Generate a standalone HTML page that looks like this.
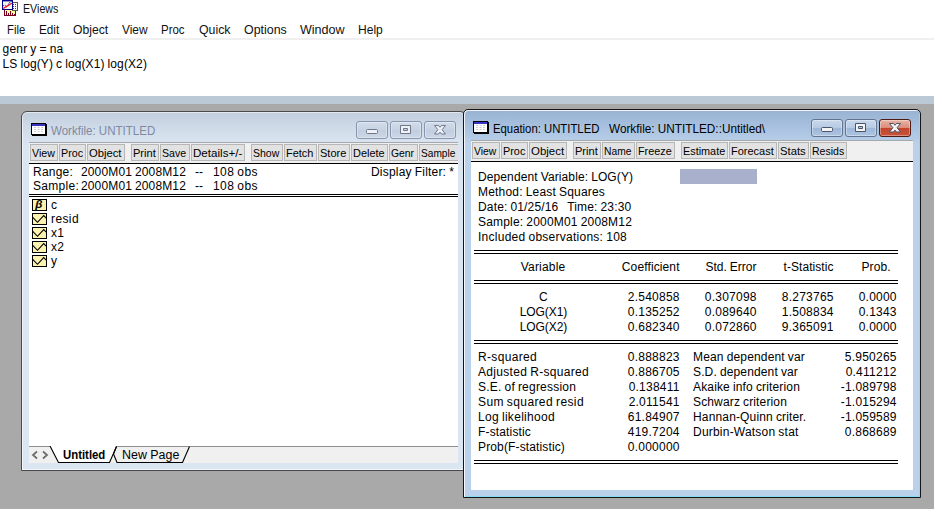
<!DOCTYPE html>
<html>
<head>
<meta charset="utf-8">
<title>EViews</title>
<style>
html,body{margin:0;padding:0;}
body{width:934px;height:509px;overflow:hidden;background:#a9a9a9;position:relative;font-family:"Liberation Sans",sans-serif;color:#000;}
.abs{position:absolute;}
.t{position:absolute;white-space:pre;line-height:12px;height:12px;}
#top{left:0;top:0;width:934px;height:96px;background:#fff;}
#sep{left:0;top:38px;width:934px;height:2px;background:#f0f0f0;}
#bar{left:0;top:96px;width:934px;height:8px;background:#bbc8d6;}
.e{font-size:12px;}
.win{position:absolute;box-sizing:border-box;border:1px solid #3f3f3f;border-radius:5px 5px 0 0;}
#wf{left:21px;top:111px;width:445px;border-radius:6px 6px 0 0;height:360px;background:linear-gradient(#c1cedd 0px,#d3deeb 20px,#dae5f1 34px,#dce6f2 100%);box-shadow:inset 0 0 0 1px rgba(255,255,255,.55);border-color:#4a4a4a;}
#eq{left:463px;top:109px;width:458px;height:389px;background:linear-gradient(#98b2d3 0px,#a9c2e0 18px,#b9d1ea 34px,#b9d1ea 100%);border-color:#151515;box-shadow:inset 1px 1px 0 rgba(255,255,255,.85),inset -1px -1px 0 #86dcf3;}
.tb{position:absolute;background:#f0f0f0;overflow:hidden;box-sizing:border-box;border-top:1px solid #a5a8ad;}
.btn{position:absolute;top:1px;height:17px;box-sizing:border-box;border:1px solid #b6b6b6;background:#e2e2e2;}
.client{position:absolute;background:#fff;}
.hl{position:absolute;background:#000;height:1px;}
.cb{position:absolute;box-sizing:border-box;border:1px solid #8795ae;border-radius:3px;box-shadow:inset 0 0 0 1px rgba(255,255,255,.35);}
</style>
</head>
<body>
<div class="abs" id="top"></div>
<div class="abs" id="sep"></div>
<div class="abs" id="bar"></div>
<svg class="abs" style="left:2px;top:0px" width="17" height="17" viewBox="0 0 17 17">
  <rect x="2.5" y="9.5" width="11" height="6" fill="#ffff9e" stroke="#7a0020" stroke-width="1"/>
  <g fill="#7a0020"><rect x="4" y="11" width="1" height="4"/><rect x="6" y="13" width="1" height="2"/><rect x="8" y="11" width="1" height="4"/><rect x="10" y="13" width="1" height="2"/><rect x="12" y="14" width="1" height="1"/></g>
  <rect x="10.5" y="2.5" width="5" height="8" fill="#fff" stroke="#555" stroke-width="1"/>
  <g fill="#444"><rect x="11" y="4" width="1" height="1"/><rect x="13" y="4" width="1" height="1"/><rect x="11" y="6" width="1" height="1"/><rect x="13" y="6" width="1" height="1"/><rect x="11" y="8" width="1" height="1"/><rect x="13" y="8" width="1" height="1"/></g>
  <rect x="0.5" y="0.5" width="10" height="9" fill="#f1f6ef" stroke="#00008b" stroke-width="1"/>
  <rect x="0" y="0" width="11" height="1.4" fill="#00008b"/>
  <path d="M1.2 5.6 L3.2 5.2 L4.6 7 L6 6.2 L6.6 3.2 L8.2 2.4 L9.6 1.6" stroke="#2020e0" stroke-width="1" stroke-dasharray="1 0.9" fill="none"/>
  <path d="M1.2 8.5 L9.7 3.3" stroke="#ff0000" stroke-width="1.2" fill="none"/>
</svg>

<div class="t" style="left:23.00px;top:3px;font-size:13px;color:#111;transform-origin:0 50%;transform:scaleX(0.8190);">EViews</div>
<div class="t" style="left:7.00px;top:24px;font-size:13px;color:#111;transform-origin:0 50%;transform:scaleX(0.8688);">File</div>
<div class="t" style="left:38.90px;top:24px;font-size:13px;color:#111;transform-origin:0 50%;transform:scaleX(0.9018);">Edit</div>
<div class="t" style="left:72.60px;top:24px;font-size:13px;color:#111;transform-origin:0 50%;transform:scaleX(0.9369);">Object</div>
<div class="t" style="left:121.60px;top:24px;font-size:13px;color:#111;transform-origin:0 50%;transform:scaleX(0.9156);">View</div>
<div class="t" style="left:161.20px;top:24px;font-size:13px;color:#111;transform-origin:0 50%;transform:scaleX(0.8829);">Proc</div>
<div class="t" style="left:199.00px;top:24px;font-size:13px;color:#111;transform-origin:0 50%;transform:scaleX(0.9479);">Quick</div>
<div class="t" style="left:243.80px;top:24px;font-size:13px;color:#111;transform-origin:0 50%;transform:scaleX(0.9553);">Options</div>
<div class="t" style="left:300.00px;top:24px;font-size:13px;color:#111;transform-origin:0 50%;transform:scaleX(0.9646);">Window</div>
<div class="t" style="left:358.20px;top:24px;font-size:13px;color:#111;transform-origin:0 50%;transform:scaleX(0.9276);">Help</div>
<div class="t e" style="left:2.50px;top:43px;letter-spacing:0.203px;word-spacing:-0.537px;">genr y = na</div>
<div class="t e" style="left:2.50px;top:58px;letter-spacing:0.106px;word-spacing:-0.440px;">LS log(Y) c log(X1) log(X2)</div>
<div class="win" id="wf"></div>
<svg class="abs" style="left:31px;top:123px" width="16" height="13" viewBox="0 0 16 13">
<rect x="1" y="1" width="15" height="12" fill="#000"/>
<rect x="0.5" y="0.5" width="14" height="11" fill="#fff" stroke="#000"/>
<rect x="1" y="1" width="13" height="2" fill="#3636c4"/>
<g fill="#cfcfcf"><rect x="3" y="4" width="2" height="1"/><rect x="6.5" y="4" width="2" height="1"/><rect x="10" y="4" width="2" height="1"/><rect x="3" y="6" width="2" height="1"/><rect x="6.5" y="6" width="2" height="1"/><rect x="10" y="6" width="2" height="1"/><rect x="3" y="8" width="2" height="1"/><rect x="6.5" y="8" width="2" height="1"/><rect x="10" y="8" width="2" height="1"/></g>
</svg>
<div class="t" style="left:51.00px;top:125px;font-size:12.5px;color:#7f89a1;transform-origin:0 50%;transform:scaleX(0.9231);">Workfile: UNTITLED</div>
<div class="cb" style="left:356px;top:121px;width:32px;height:18px;background:linear-gradient(#d2dcea,#c6d2e2 50%,#c1cedf 52%,#ccd7e6);"></div>
<svg class="abs" style="left:356px;top:121px" width="32" height="18" viewBox="0 0 32 18"><rect x="10.5" y="8.5" width="11" height="4" rx="1" fill="#eef1f5" stroke="#70778a"/></svg>
<div class="cb" style="left:390px;top:121px;width:32px;height:18px;background:linear-gradient(#d2dcea,#c6d2e2 50%,#c1cedf 52%,#ccd7e6);"></div>
<svg class="abs" style="left:390px;top:121px" width="32" height="18" viewBox="0 0 32 18"><path fill-rule="evenodd" d="M10.5 4.5h10v8h-10z M13.5 7.5v2h4v-2z" fill="#eef1f5" stroke="#70778a" stroke-linejoin="round"/></svg>
<div class="cb" style="left:424px;top:121px;width:32px;height:18px;background:linear-gradient(#d2dcea,#c6d2e2 50%,#c1cedf 52%,#ccd7e6);"></div>
<svg class="abs" style="left:424px;top:121px" width="32" height="18" viewBox="0 0 32 18"><path d="M10.5 4.5 h4 l1.5 1.8 l1.5 -1.8 h4 l-3.4 4.2 l3.4 4.3 h-4 l-1.5 -1.9 l-1.5 1.9 h-4 l3.4 -4.3 z" fill="#eef1f5" stroke="#70778a" stroke-linejoin="round"/></svg>
<div class="tb" style="left:29px;top:142px;width:429px;height:21px;">
<div class="btn" style="left:1px;width:28px;"></div>
<div class="btn" style="left:30px;width:27px;"></div>
<div class="btn" style="left:58px;width:38px;"></div>
<div class="btn" style="left:102px;width:28px;"></div>
<div class="btn" style="left:131px;width:30px;"></div>
<div class="btn" style="left:162px;width:54px;"></div>
<div class="btn" style="left:222px;width:32px;"></div>
<div class="btn" style="left:255px;width:33px;"></div>
<div class="btn" style="left:289px;width:32px;"></div>
<div class="btn" style="left:322px;width:37px;"></div>
<div class="btn" style="left:360px;width:29px;"></div>
<div class="btn" style="left:390px;width:41px;"></div>
<div class="t" style="left:3.10px;top:4px;font-size:11.5px;color:#000;transform-origin:0 50%;transform:scaleX(0.9227);">View</div>
<div class="t" style="left:32.10px;top:4px;font-size:11.5px;color:#000;transform-origin:0 50%;transform:scaleX(0.9304);">Proc</div>
<div class="t" style="left:60.20px;top:4px;font-size:11.5px;color:#000;transform-origin:0 50%;transform:scaleX(0.9778);">Object</div>
<div class="t" style="left:104.00px;top:4px;font-size:11.5px;color:#000;transform-origin:0 50%;transform:scaleX(0.9600);">Print</div>
<div class="t" style="left:133.30px;top:4px;font-size:11.5px;color:#000;transform-origin:0 50%;transform:scaleX(0.9194);">Save</div>
<div class="t" style="left:164.00px;top:4px;font-size:11.5px;color:#000;transform-origin:0 50%;transform:scaleX(1.0083);">Details+/-</div>
<div class="t" style="left:224.00px;top:4px;font-size:11.5px;color:#000;transform-origin:0 50%;transform:scaleX(0.9142);">Show</div>
<div class="t" style="left:257.10px;top:4px;font-size:11.5px;color:#000;transform-origin:0 50%;transform:scaleX(0.9527);">Fetch</div>
<div class="t" style="left:291.20px;top:4px;font-size:11.5px;color:#000;transform-origin:0 50%;transform:scaleX(0.9568);">Store</div>
<div class="t" style="left:324.00px;top:4px;font-size:11.5px;color:#000;transform-origin:0 50%;transform:scaleX(0.9536);">Delete</div>
<div class="t" style="left:362.20px;top:4px;font-size:11.5px;color:#000;transform-origin:0 50%;transform:scaleX(0.8996);">Genr</div>
<div class="t" style="left:392.20px;top:4px;font-size:11.5px;color:#000;transform-origin:0 50%;transform:scaleX(0.8822);">Sample</div>
</div>
<div class="hl" style="left:29px;top:163px;width:429px;"></div>
<div class="client" style="left:29px;top:164px;width:429px;height:282px;"></div>
<div class="t e" style="left:33.00px;top:166px;letter-spacing:0.217px;word-spacing:-0.551px;">Range:</div>
<div class="t e" style="left:81.00px;top:166px;letter-spacing:0.137px;word-spacing:-0.471px;">2000M01 2008M12</div>
<div class="t e" style="left:195.00px;top:166px;letter-spacing:0.004px;word-spacing:-0.338px;">--</div>
<div class="t e" style="left:213.00px;top:166px;letter-spacing:0.438px;word-spacing:-0.772px;">108 obs</div>
<div class="t e" style="left:371.00px;top:166px;letter-spacing:0.199px;word-spacing:-0.533px;">Display Filter: *</div>
<div class="t e" style="left:33.00px;top:180px;letter-spacing:0.283px;word-spacing:-0.617px;">Sample:</div>
<div class="t e" style="left:81.00px;top:180px;letter-spacing:0.137px;word-spacing:-0.471px;">2000M01 2008M12</div>
<div class="t e" style="left:195.00px;top:180px;letter-spacing:0.004px;word-spacing:-0.338px;">--</div>
<div class="t e" style="left:213.00px;top:180px;letter-spacing:0.438px;word-spacing:-0.772px;">108 obs</div>
<div class="hl" style="left:29px;top:194px;width:429px;"></div>
<div class="hl" style="left:29px;top:196px;width:429px;"></div>
<svg class="abs" style="left:32px;top:199px" width="15" height="12" viewBox="0 0 15 12"><rect x="0.5" y="0.5" width="14" height="11" fill="#fcf2b0" stroke="#000"/><text x="3.2" y="9.3" font-family="Liberation Sans" font-style="italic" font-weight="bold" font-size="11.5" fill="#000">&#946;</text></svg>
<div class="t e" style="left:51.00px;top:199px;letter-spacing:0.000px;word-spacing:-0.334px;">c</div>
<svg class="abs" style="left:32px;top:213px" width="15" height="12" viewBox="0 0 15 12"><rect x="0.5" y="0.5" width="14" height="11" fill="#fcf2b0" stroke="#000"/><path d="M0.5 4.2 L5.5 9.3 L11.7 2.6 L14.5 5.3" fill="none" stroke="#000" stroke-width="1.1"/></svg>
<div class="t e" style="left:51.00px;top:213px;letter-spacing:0.398px;word-spacing:-0.732px;">resid</div>
<svg class="abs" style="left:32px;top:227px" width="15" height="12" viewBox="0 0 15 12"><rect x="0.5" y="0.5" width="14" height="11" fill="#fcf2b0" stroke="#000"/><path d="M0.5 4.2 L5.5 9.3 L11.7 2.6 L14.5 5.3" fill="none" stroke="#000" stroke-width="1.1"/></svg>
<div class="t e" style="left:51.00px;top:227px;letter-spacing:0.163px;word-spacing:-0.497px;">x1</div>
<svg class="abs" style="left:32px;top:241px" width="15" height="12" viewBox="0 0 15 12"><rect x="0.5" y="0.5" width="14" height="11" fill="#fcf2b0" stroke="#000"/><path d="M0.5 4.2 L5.5 9.3 L11.7 2.6 L14.5 5.3" fill="none" stroke="#000" stroke-width="1.1"/></svg>
<div class="t e" style="left:51.00px;top:241px;letter-spacing:0.163px;word-spacing:-0.497px;">x2</div>
<svg class="abs" style="left:32px;top:255px" width="15" height="12" viewBox="0 0 15 12"><rect x="0.5" y="0.5" width="14" height="11" fill="#fcf2b0" stroke="#000"/><path d="M0.5 4.2 L5.5 9.3 L11.7 2.6 L14.5 5.3" fill="none" stroke="#000" stroke-width="1.1"/></svg>
<div class="t e" style="left:51.00px;top:255px;letter-spacing:0.000px;word-spacing:-0.334px;">y</div>
<div class="abs" style="left:29px;top:446px;width:429px;height:17px;background:#f0f0f0;border-top:1px solid #909090;box-sizing:border-box;"></div>
<svg class="abs" style="left:29px;top:446px" width="180" height="17" viewBox="0 0 180 17">
<path d="M21 0 L29.5 16.5 H80.5 L87.5 0 Z" fill="#fff"/>
<path d="M21 0 L29.5 16.5 H80.5 L87.5 0.5" fill="none" stroke="#000" stroke-width="1.1"/>
<path d="M87.5 0.5 L84.5 8 L88 16.5 H153.5 L160.5 0.5" fill="none" stroke="#000" stroke-width="1.1"/>
<path d="M8 5.5 L4 9 L8 12.5" fill="none" stroke="#6e6e6e" stroke-width="1.8"/>
<path d="M14 5.5 L18 9 L14 12.5" fill="none" stroke="#6e6e6e" stroke-width="1.8"/>
</svg>
<div class="t" style="left:63.30px;top:449px;font-size:12px;color:#000;font-weight:bold;transform-origin:0 50%;transform:scaleX(0.9472);">Untitled</div>
<div class="t" style="left:121.50px;top:449px;font-size:12px;color:#000;transform-origin:0 50%;transform:scaleX(1.0349);">New Page</div>
<div class="win" id="eq"></div>
<svg class="abs" style="left:473px;top:121px" width="16" height="13" viewBox="0 0 16 13">
<rect x="1" y="1" width="15" height="12" fill="#000"/>
<rect x="0.5" y="0.5" width="14" height="11" fill="#fff" stroke="#000"/>
<rect x="1" y="1" width="13" height="2" fill="#3636c4"/>
<g fill="#cfcfcf"><rect x="3" y="4" width="2" height="1"/><rect x="6.5" y="4" width="2" height="1"/><rect x="10" y="4" width="2" height="1"/><rect x="3" y="6" width="2" height="1"/><rect x="6.5" y="6" width="2" height="1"/><rect x="10" y="6" width="2" height="1"/><rect x="3" y="8" width="2" height="1"/><rect x="6.5" y="8" width="2" height="1"/><rect x="10" y="8" width="2" height="1"/></g>
</svg>
<div class="t" style="left:493.00px;top:123px;font-size:12.5px;color:#000;transform-origin:0 50%;transform:scaleX(0.9062);">Equation: UNTITLED</div>
<div class="t" style="left:608.60px;top:123px;font-size:12.5px;color:#000;transform-origin:0 50%;transform:scaleX(0.9415);">Workfile: UNTITLED::Untitled\</div>
<div class="cb" style="left:811px;top:119px;width:32px;height:18px;background:linear-gradient(#c9d8ec 0,#b6cbe5 48%,#9db7d8 52%,#adc5e2 100%);border-color:#63748f"></div>
<svg class="abs" style="left:811px;top:119px" width="32" height="18" viewBox="0 0 32 18"><rect x="10.5" y="8.5" width="11" height="4" rx="1" fill="#f4f4f4" stroke="#4c5568"/></svg>
<div class="cb" style="left:845px;top:119px;width:32px;height:18px;background:linear-gradient(#c9d8ec 0,#b6cbe5 48%,#9db7d8 52%,#adc5e2 100%);border-color:#63748f"></div>
<svg class="abs" style="left:845px;top:119px" width="32" height="18" viewBox="0 0 32 18"><path fill-rule="evenodd" d="M10.5 4.5h10v8h-10z M13.5 7.5v2h4v-2z" fill="#f4f4f4" stroke="#4c5568" stroke-linejoin="round"/></svg>
<div class="cb" style="left:879px;top:119px;width:32px;height:18px;background:linear-gradient(#e9b5a6 0,#d98c79 48%,#c2452c 52%,#c9543a 100%);border-color:#4e1a14"></div>
<svg class="abs" style="left:879px;top:119px" width="32" height="18" viewBox="0 0 32 18"><path d="M10.5 4.5 h4 l1.5 1.8 l1.5 -1.8 h4 l-3.4 4.2 l3.4 4.3 h-4 l-1.5 -1.9 l-1.5 1.9 h-4 l3.4 -4.3 z" fill="#f4f4f4" stroke="#4c5568" stroke-linejoin="round"/></svg>
<div class="tb" style="left:471px;top:140px;width:442px;height:21px;">
<div class="btn" style="left:1px;width:28px;"></div>
<div class="btn" style="left:30px;width:27px;"></div>
<div class="btn" style="left:58px;width:38px;"></div>
<div class="btn" style="left:102px;width:28px;"></div>
<div class="btn" style="left:131px;width:33px;"></div>
<div class="btn" style="left:165px;width:39px;"></div>
<div class="btn" style="left:210px;width:47px;"></div>
<div class="btn" style="left:258px;width:48px;"></div>
<div class="btn" style="left:307px;width:31px;"></div>
<div class="btn" style="left:339px;width:37px;"></div>
<div class="t" style="left:3.40px;top:4px;font-size:11.5px;color:#000;transform-origin:0 50%;transform:scaleX(0.9027);">View</div>
<div class="t" style="left:31.90px;top:4px;font-size:11.5px;color:#000;transform-origin:0 50%;transform:scaleX(0.9431);">Proc</div>
<div class="t" style="left:60.10px;top:4px;font-size:11.5px;color:#000;transform-origin:0 50%;transform:scaleX(0.9959);">Object</div>
<div class="t" style="left:104.00px;top:4px;font-size:11.5px;color:#000;transform-origin:0 50%;transform:scaleX(0.9600);">Print</div>
<div class="t" style="left:133.10px;top:4px;font-size:11.5px;color:#000;transform-origin:0 50%;transform:scaleX(0.8932);">Name</div>
<div class="t" style="left:166.80px;top:4px;font-size:11.5px;color:#000;transform-origin:0 50%;transform:scaleX(0.9416);">Freeze</div>
<div class="t" style="left:211.60px;top:4px;font-size:11.5px;color:#000;transform-origin:0 50%;transform:scaleX(0.9433);">Estimate</div>
<div class="t" style="left:260.10px;top:4px;font-size:11.5px;color:#000;transform-origin:0 50%;transform:scaleX(0.9545);">Forecast</div>
<div class="t" style="left:309.10px;top:4px;font-size:11.5px;color:#000;transform-origin:0 50%;transform:scaleX(0.9807);">Stats</div>
<div class="t" style="left:340.80px;top:4px;font-size:11.5px;color:#000;transform-origin:0 50%;transform:scaleX(0.9160);">Resids</div>
</div>
<div class="hl" style="left:471px;top:161px;width:442px;"></div>
<div class="client" style="left:471px;top:162px;width:442px;height:328px;"></div>
<div class="abs" style="left:680px;top:169px;width:77px;height:15px;background:#a9b0cc;"></div>
<div class="t e" style="left:478.00px;top:171px;letter-spacing:0.108px;word-spacing:-0.442px;">Dependent Variable: LOG(Y)</div>
<div class="t e" style="left:478.00px;top:186px;letter-spacing:0.189px;word-spacing:-0.523px;">Method: Least Squares</div>
<div class="t e" style="left:478.00px;top:201px;letter-spacing:0.156px;word-spacing:-0.490px;">Date: 01/25/16   Time: 23:30</div>
<div class="t e" style="left:478.00px;top:216px;letter-spacing:0.186px;word-spacing:-0.520px;">Sample: 2000M01 2008M12</div>
<div class="t e" style="left:478.00px;top:231px;letter-spacing:0.260px;word-spacing:-0.594px;">Included observations: 108</div>
<div class="hl" style="left:474px;top:250px;width:424px;"></div>
<div class="hl" style="left:474px;top:253px;width:424px;"></div>
<div class="hl" style="left:474px;top:280px;width:424px;"></div>
<div class="hl" style="left:474px;top:283px;width:424px;"></div>
<div class="hl" style="left:474px;top:340px;width:424px;"></div>
<div class="hl" style="left:474px;top:343px;width:424px;"></div>
<div class="hl" style="left:474px;top:460px;width:424px;"></div>
<div class="hl" style="left:474px;top:463px;width:424px;"></div>
<div class="t e" style="left:520.75px;top:261px;letter-spacing:0.184px;word-spacing:-0.518px;">Variable</div>
<div class="t e" style="right:254.38px;top:261px;letter-spacing:0.119px;word-spacing:-0.453px;">Coefficient</div>
<div class="t e" style="right:177.50px;top:261px;letter-spacing:-0.001px;word-spacing:-0.333px;">Std. Error</div>
<div class="t e" style="right:100.44px;top:261px;letter-spacing:0.060px;word-spacing:-0.394px;">t-Statistic</div>
<div class="t e" style="right:43.44px;top:261px;letter-spacing:0.064px;word-spacing:-0.398px;">Prob.</div>
<div class="t e" style="left:539.00px;top:291px;letter-spacing:0.334px;word-spacing:-0.668px;">C</div>
<div class="t e" style="right:254.26px;top:291px;letter-spacing:0.244px;word-spacing:-0.578px;">2.540858</div>
<div class="t e" style="right:177.26px;top:291px;letter-spacing:0.244px;word-spacing:-0.578px;">0.307098</div>
<div class="t e" style="right:100.26px;top:291px;letter-spacing:0.244px;word-spacing:-0.578px;">8.273765</div>
<div class="t e" style="right:37.28px;top:291px;letter-spacing:0.216px;word-spacing:-0.550px;">0.0000</div>
<div class="t e" style="left:519.75px;top:306px;letter-spacing:-0.073px;word-spacing:-0.261px;">LOG(X1)</div>
<div class="t e" style="right:254.26px;top:306px;letter-spacing:0.244px;word-spacing:-0.578px;">0.135252</div>
<div class="t e" style="right:177.26px;top:306px;letter-spacing:0.244px;word-spacing:-0.578px;">0.089640</div>
<div class="t e" style="right:100.26px;top:306px;letter-spacing:0.244px;word-spacing:-0.578px;">1.508834</div>
<div class="t e" style="right:37.28px;top:306px;letter-spacing:0.216px;word-spacing:-0.550px;">0.1343</div>
<div class="t e" style="left:519.75px;top:321px;letter-spacing:-0.073px;word-spacing:-0.261px;">LOG(X2)</div>
<div class="t e" style="right:254.26px;top:321px;letter-spacing:0.244px;word-spacing:-0.578px;">0.682340</div>
<div class="t e" style="right:177.26px;top:321px;letter-spacing:0.244px;word-spacing:-0.578px;">0.072860</div>
<div class="t e" style="right:100.26px;top:321px;letter-spacing:0.244px;word-spacing:-0.578px;">9.365091</div>
<div class="t e" style="right:37.28px;top:321px;letter-spacing:0.216px;word-spacing:-0.550px;">0.0000</div>
<div class="t e" style="left:478.00px;top:351px;letter-spacing:0.330px;word-spacing:-0.664px;">R-squared</div>
<div class="t e" style="right:254.26px;top:351px;letter-spacing:0.244px;word-spacing:-0.578px;">0.888823</div>
<div class="t e" style="left:693.00px;top:351px;letter-spacing:0.162px;word-spacing:-0.496px;">Mean dependent var</div>
<div class="t e" style="right:37.26px;top:351px;letter-spacing:0.244px;word-spacing:-0.578px;">5.950265</div>
<div class="t e" style="left:478.00px;top:366px;letter-spacing:0.310px;word-spacing:-0.644px;">Adjusted R-squared</div>
<div class="t e" style="right:254.26px;top:366px;letter-spacing:0.244px;word-spacing:-0.578px;">0.886705</div>
<div class="t e" style="left:693.00px;top:366px;letter-spacing:0.142px;word-spacing:-0.476px;">S.D. dependent var</div>
<div class="t e" style="right:37.26px;top:366px;letter-spacing:0.244px;word-spacing:-0.578px;">0.411212</div>
<div class="t e" style="left:478.00px;top:381px;letter-spacing:0.206px;word-spacing:-0.540px;">S.E. of regression</div>
<div class="t e" style="right:254.26px;top:381px;letter-spacing:0.244px;word-spacing:-0.578px;">0.138411</div>
<div class="t e" style="left:693.00px;top:381px;letter-spacing:0.156px;word-spacing:-0.490px;">Akaike info criterion</div>
<div class="t e" style="right:37.28px;top:381px;letter-spacing:0.217px;word-spacing:-0.551px;">-1.089798</div>
<div class="t e" style="left:478.00px;top:396px;letter-spacing:0.397px;word-spacing:-0.731px;">Sum squared resid</div>
<div class="t e" style="right:254.26px;top:396px;letter-spacing:0.244px;word-spacing:-0.578px;">2.011541</div>
<div class="t e" style="left:693.00px;top:396px;letter-spacing:0.144px;word-spacing:-0.478px;">Schwarz criterion</div>
<div class="t e" style="right:37.28px;top:396px;letter-spacing:0.217px;word-spacing:-0.551px;">-1.015294</div>
<div class="t e" style="left:478.00px;top:411px;letter-spacing:0.303px;word-spacing:-0.637px;">Log likelihood</div>
<div class="t e" style="right:254.26px;top:411px;letter-spacing:0.244px;word-spacing:-0.578px;">61.84907</div>
<div class="t e" style="left:693.00px;top:411px;letter-spacing:0.155px;word-spacing:-0.489px;">Hannan-Quinn criter.</div>
<div class="t e" style="right:37.28px;top:411px;letter-spacing:0.217px;word-spacing:-0.551px;">-1.059589</div>
<div class="t e" style="left:478.00px;top:426px;letter-spacing:0.151px;word-spacing:-0.485px;">F-statistic</div>
<div class="t e" style="right:254.26px;top:426px;letter-spacing:0.244px;word-spacing:-0.578px;">419.7204</div>
<div class="t e" style="left:693.00px;top:426px;letter-spacing:0.214px;word-spacing:-0.548px;">Durbin-Watson stat</div>
<div class="t e" style="right:37.26px;top:426px;letter-spacing:0.244px;word-spacing:-0.578px;">0.868689</div>
<div class="t e" style="left:478.00px;top:441px;letter-spacing:0.137px;word-spacing:-0.471px;">Prob(F-statistic)</div>
<div class="t e" style="right:254.26px;top:441px;letter-spacing:0.244px;word-spacing:-0.578px;">0.000000</div>
</body>
</html>
